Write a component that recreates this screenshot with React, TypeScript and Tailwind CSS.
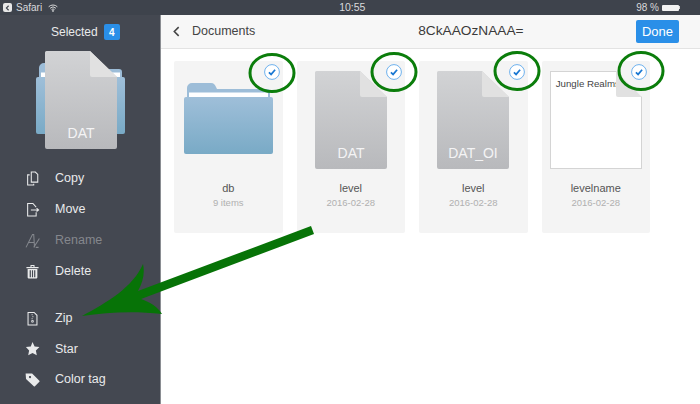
const FONT = "font-['Liberation_Sans',Arial,sans-serif]";

function FileShape({ label, id }: { label: string; id: string }) {
  return (
    <svg viewBox="0 0 72 98" className="h-[98px] w-[72px]">
      <defs>
        <linearGradient id={id} x1="0" y1="0" x2="0" y2="1">
          <stop offset="0" stopColor="#d2d3d5" />
          <stop offset="1" stopColor="#b8b9bc" />
        </linearGradient>
      </defs>
      <path d="M1.500 0H45L72 26V96a2 2 0 0 1-2 2H2a2 2 0 0 1-2-2V1.500A1.500 1.500 0 0 1 1.500 0Z" fill={`url(#${id})`} />
      <path d="M45 0L72 26H47a2 2 0 0 1-2-2Z" fill="#e1e1e1" />
      <text x="36" y="87" textAnchor="middle" fontSize="14" fill="#f4f4f5" fontFamily="Liberation Sans, Arial, sans-serif">
        {label}
      </text>
    </svg>
  );
}

function FolderShape({ id }: { id: string }) {
  return (
    <svg viewBox="0 0 89 71" className="h-[71px] w-[89px]">
      <defs>
        <linearGradient id={id} x1="0" y1="0" x2="0" y2="1">
          <stop offset="0" stopColor="#9fbfd9" />
          <stop offset="1" stopColor="#79aac6" />
        </linearGradient>
      </defs>
      <path d="M3 14V5a5 5 0 0 1 5-5h19c3 0 4 2 5 4l1 2h50a3 3 0 0 1 3 3v6H3Z" fill="#9dbdd8" />
      <path d="M5 9.500h79V15H5Z" fill="#ffffff" />
      <path d="M2 14h85a2 2 0 0 1 2 2v53a2 2 0 0 1-2 2H2a2 2 0 0 1-2-2V16a2 2 0 0 1 2-2Z" fill={`url(#${id})`} />
    </svg>
  );
}

function Check() {
  return (
    <svg viewBox="0 0 16 16" className="absolute right-[3px] top-[3px] z-10 h-4 w-4">
      <circle cx="8" cy="8" r="7.400" fill="#fff" stroke="#5fa9ec" strokeWidth="0.900" />
      <path d="M4.900 8.300l2.200 2.100 4-4.600" fill="none" stroke="#1877d2" strokeWidth="1.700" />
    </svg>
  );
}

const stroke = { fill: "none", stroke: "currentColor", strokeWidth: 1.300 };

const menu = [
  {
    name: "Copy",
    icon: (
      <g {...stroke}>
        <path d="M9 2.500h5l3 3v9.500H9Z" />
        <path d="M7 6H4.500v12.500H12V17" />
      </g>
    ),
  },
  {
    name: "Move",
    icon: (
      <g {...stroke}>
        <path d="M15 7.500L11 3H4.500v15.500H15V14" />
        <path d="M8.500 11H18M15.500 9l2.500 2-2.500 2" />
      </g>
    ),
  },
  {
    name: "Rename",
    muted: true,
    icon: (
      <g {...stroke}>
        <path d="M2.500 19L10.500 3h1.500l1 16M6 13h7M12 19l7-11M14.500 19h3.500" />
      </g>
    ),
  },
  {
    name: "Delete",
    icon: (
      <g fill="currentColor">
        <path d="M3 5h15v1.600H3ZM8 2.500h5V5h-1.300V3.800H9.300V5H8Z" />
        <path d="M4.500 7.500h12V18a1 1 0 0 1-1 1h-10a1 1 0 0 1-1-1ZM7 9v8.500h1.500V9Zm2.800 0v8.500h1.400V9Zm2.700 0v8.500H14V9Z" fillRule="evenodd" />
      </g>
    ),
  },
  { gap: true },
  {
    name: "Zip",
    icon: (
      <g {...stroke}>
        <path d="M5 3h7.500L16 6.500V18.500H5Z" />
        <path d="M10 5v1.500M11 7.500v1.500M10 10v1.500M9.500 13h2v2h-2Z" strokeWidth="1" />
      </g>
    ),
  },
  {
    name: "Star",
    icon: <path d="M10.500 2.500l2.600 5.500 6 .8-4.400 4.100 1.100 6-5.300-2.900-5.300 2.900 1.100-6L2.400 8.800l6-.8Z" fill="currentColor" />,
  },
  {
    name: "Color tag",
    icon: <path d="M2 3h8l9 9a1 1 0 0 1 0 1.400l-5.500 5.500a1 1 0 0 1-1.400 0L2.500 10Zm4 4.500a1.400 1.400 0 1 0 0-.1Z" fill="currentColor" fillRule="evenodd" />,
  },
];

const items = [
  { name: "db", sub: "9 items", kind: "folder" },
  { name: "level", sub: "2016-02-28", kind: "DAT" },
  { name: "level", sub: "2016-02-28", kind: "DAT_OI" },
  { name: "levelname", sub: "2016-02-28", kind: "doc" },
];

export default function App() {
  return (
    <div className={`relative h-[404px] w-[700px] overflow-hidden bg-white ${FONT}`}>
      {/* status bar */}
      <div className="flex h-[15px] items-center bg-[#3e434c] pl-[3px] pr-[20px] text-[10px] text-[#d9dadc]">
        <span className="flex h-[9px] w-[9px] items-center justify-center rounded-[2px] bg-[#e8e8e8]">
          <svg viewBox="0 0 6 8" className="h-[6px] w-[5px]">
            <path d="M4.500 1L1.500 4l3 3" fill="none" stroke="#3e434c" strokeWidth="1.500" />
          </svg>
        </span>
        <span className="ml-1">Safari</span>
        <svg viewBox="0 0 12 9" className="ml-[6px] h-[8px] w-[10px]">
          <path d="M.8 3a7.500 7.500 0 0 1 10.400 0M2.500 4.800a5 5 0 0 1 7 0M4.200 6.500a2.500 2.500 0 0 1 3.600 0" fill="none" stroke="#e4e4e4" strokeWidth="1.100" />
          <circle cx="6" cy="8" r="1" fill="#e4e4e4" />
        </svg>
        <span className="ml-[281px] text-[10.500px]">10:55</span>
        <span className="ml-auto text-[10px]">98 %</span>
        <span className="ml-[3px] flex items-center">
          <span className="h-[6px] w-[17px] rounded-[1px] bg-[#f2f2f2]" />
          <span className="h-[3px] w-px bg-[#d5d5d5]" />
        </span>
      </div>

      <div className="flex h-[389px]">
        {/* sidebar */}
        <aside className="flex w-[161px] shrink-0 flex-col border-r border-[#8a8d92] bg-[#444851] text-[#e9eaeb]">
          <div className="mt-[9px] flex h-4 items-center pl-[51px] text-[12px]">
            Selected
            <span className="ml-[6px] flex h-4 w-4 items-center justify-center rounded-[2px] bg-[#2a8fe8] text-[10px] font-bold text-white">
              4
            </span>
          </div>
          <div className="relative ml-[36px] mt-[11px] h-[96px] w-[89px]">
            <div className="absolute left-0 top-[12px]">
              <FolderShape id="side-folder" />
            </div>
            <div className="absolute left-[9px] top-0">
              <FileShape label="DAT" id="side-file" />
            </div>
          </div>
          <nav className="mt-[16px] flex flex-col">
            {menu.map((m, i) =>
              m.gap ? (
                <div key={i} className="h-[16px]" />
              ) : (
                <div
                  key={m.name}
                  className={`flex h-[30.900px] items-center pl-[24px] text-[12.500px] ${m.muted ? "text-[#84878d]" : ""}`}
                >
                  <svg viewBox="0 0 21 21" className="h-[17px] w-[17px] shrink-0">
                    {m.icon}
                  </svg>
                  <span className="ml-[14px]">{m.name}</span>
                </div>
              ),
            )}
          </nav>
        </aside>

        <main className="flex-1">
          {/* toolbar */}
          <div className="flex h-[34px] items-center border-b border-[#e3e3e3] bg-[#f7f7f7] pr-[21px] text-[#444]">
            <svg viewBox="0 0 8 12" className="ml-[12px] h-[11px] w-[7px]">
              <path d="M6.500 1L1.500 6l5 5" fill="none" stroke="#444" strokeWidth="1.800" />
            </svg>
            <span className="ml-[12px] text-[12.500px]">Documents</span>
            <span className="ml-[163px] text-[13.700px] text-[#3a3a3a]">8CkAAOzNAAA=</span>
            <button className="ml-auto h-[23px] w-[43px] rounded-[2px] bg-[#2a8fe8] text-[13px] text-white">Done</button>
          </div>

          {/* file grid */}
          <div className="flex gap-[14px] pl-[13px] pt-[12px]">
            {items.map((it, i) => (
              <div key={i} className="relative flex h-[172px] w-[108.500px] flex-col items-center rounded-[2px] bg-[#f4f4f4]">
                <Check />
                <div className="flex h-[108px] items-center justify-center pt-[10px]">
                  {it.kind === "folder" && (
                    <div className="-mt-[3px]">
                      <FolderShape id="grid-folder" />
                    </div>
                  )}
                  {(it.kind === "DAT" || it.kind === "DAT_OI") && <FileShape label={it.kind} id={`grid-file-${i}`} />}
                  {it.kind === "doc" && (
                    <div className="relative h-[98px] w-[92px] border border-[#d4d4d4] bg-white">
                      <span className="absolute left-[5px] top-[5px] whitespace-nowrap text-[9.700px] text-[#444]">Jungle Realms</span>
                      <svg viewBox="0 0 26 26" className="absolute -right-px -top-px h-[26px] w-[26px]">
                        <path d="M0 0H26V26Z" fill="#f4f4f4" />
                        <path d="M0 0L26 26H2a2 2 0 0 1-2-2Z" fill="#e1e1e1" />
                      </svg>
                    </div>
                  )}
                </div>
                <div className="mt-[12px] text-[11px] leading-[14px] text-[#555]">{it.name}</div>
                <div className="mt-px text-[9.500px] leading-[14px] text-[#b0b0b0]">{it.sub}</div>
              </div>
            ))}
          </div>
        </main>
      </div>

      {/* green annotations drawn over the screenshot */}
      <svg viewBox="0 0 700 404" className="pointer-events-none absolute inset-0 z-20 h-[404px] w-[700px]">
        <g fill="none" stroke="#0b7d0b" strokeWidth="3">
          <ellipse cx="272" cy="73" rx="22" ry="18.500" />
          <ellipse cx="394" cy="72" rx="22" ry="18.500" />
          <ellipse cx="517" cy="71" rx="22" ry="18.500" />
          <ellipse cx="641" cy="71" rx="22" ry="18.500" />
        </g>
        <path
          d="M311 226L314 234L141 299C150 302 158 307 162 314C135 311 108 312 82 316C108 302 133 287 143 264C145 273 143 282 138 291Z"
          fill="#077307"
        />
      </svg>
    </div>
  );
}
